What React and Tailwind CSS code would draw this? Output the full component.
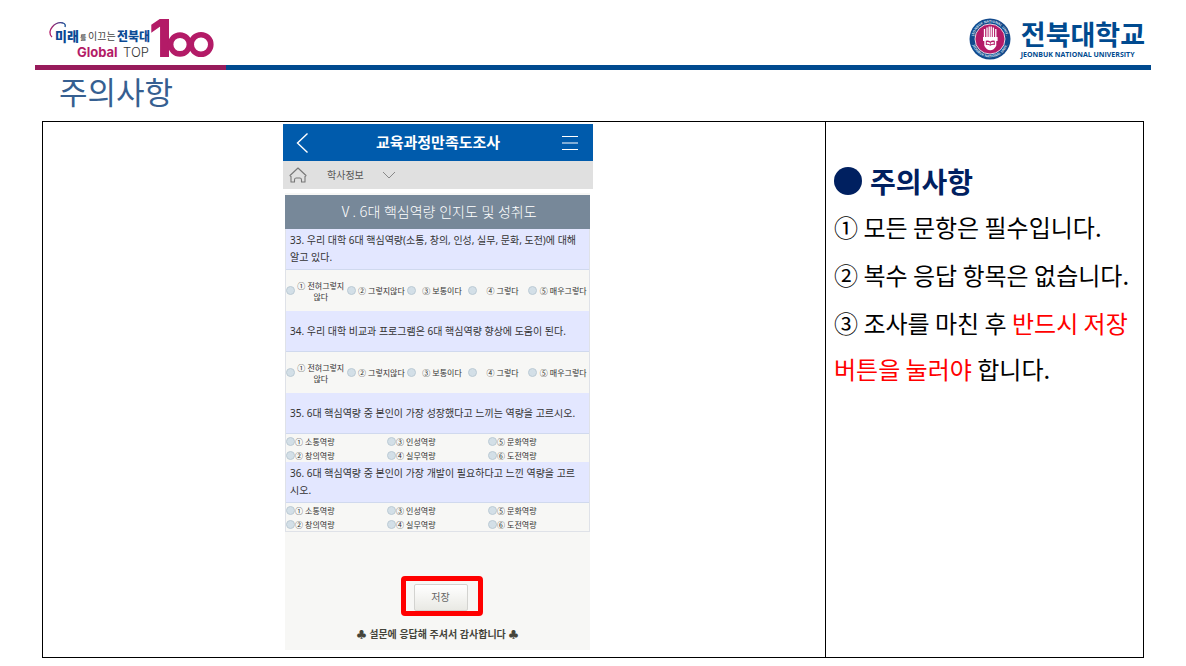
import React from 'react';

const AGREE_OPTIONS = ['① 전혀그렇지않다', '② 그렇지않다', '③ 보통이다', '④ 그렇다', '⑤ 매우그렇다'];

const COMPETENCIES = ['① 소통역량', '② 창의역량', '③ 인성역량', '④ 실무역량', '⑤ 문화역량', '⑥ 도전역량'];

const QUESTIONS = [
  {
    id: 'q33',
    text: '33. 우리 대학 6대 핵심역량(소통, 창의, 인성, 실무, 문화, 도전)에 대해 알고 있다.',
    type: 'scale',
  },
  { id: 'q34', text: '34. 우리 대학 비교과 프로그램은 6대 핵심역량 향상에 도움이 된다.', type: 'scale' },
  { id: 'q35', text: '35. 6대 핵심역량 중 본인이 가장 성장했다고 느끼는 역량을 고르시오.', type: 'pick' },
  { id: 'q36', text: '36. 6대 핵심역량 중 본인이 가장 개발이 필요하다고 느낀 역량을 고르시오.', type: 'pick' },
];

const CampaignLogo = () => (
  <svg width="170" height="48" viewBox="0 0 170 48" className="overflow-visible font-['Noto_Sans_CJK_KR',sans-serif]" role="img" aria-label="미래를 이끄는 전북대 Global TOP 100">
    <defs>
      <linearGradient id="swoosh" x1="0" y1="0" x2="1" y2="0">
        <stop offset="0" stopColor="#b5206b" />
        <stop offset="1" stopColor="#0b4a94" />
      </linearGradient>
    </defs>
    <path d="M5 22 C-1 16 8 6 16 8 Q19 9 18 12" fill="none" stroke="url(#swoosh)" strokeWidth="1.3" />
    <text x="8" y="26" fontSize="13" fontWeight="900" fill="#0b4a94">미래</text>
    <text x="33" y="25" fontSize="7" fill="#333">를</text>
    <text x="41" y="25" fontSize="10" fill="#444">이끄는</text>
    <text x="70" y="26" fontSize="12" fontWeight="900" fill="#0b4a94">전북대</text>
    <text x="30" y="42" fontSize="13" fontWeight="700" fill="#b31b67" className="font-[Inter,sans-serif]">Global</text>
    <text x="76" y="42" fontSize="13" fontWeight="300" fill="#333" className="font-[Inter,sans-serif]">TOP</text>
    <text x="102" y="42" fontSize="52" fontWeight="800" fill="#b31b67" className="font-[Inter,sans-serif]">1</text>
    <g fill="none" stroke="#b31b67" strokeWidth="5.6">
      <circle cx="133" cy="29.500" r="9.400" />
      <circle cx="154" cy="29.500" r="9.800" />
    </g>
  </svg>
);

const Emblem = () => (
  <svg width="42" height="42" viewBox="0 0 42 42" aria-hidden="true">
    <defs>
      <path id="ringTop" d="M4.6 21 A16.4 16.4 0 0 1 37.4 21" />
      <path id="ringBottom" d="M2.6 21 A18.4 18.4 0 0 0 39.4 21" />
    </defs>
    <circle cx="21" cy="21" r="20.5" fill="#124a8c" />
    <circle cx="21" cy="21" r="15" fill="#b31b67" stroke="#fff" strokeWidth="0.8" />
    <g fill="#d7e2f0" fontSize="3.4" fontWeight="700" textAnchor="middle" className="font-['Open_Sans',sans-serif]">
      <text><textPath href="#ringTop" startOffset="50%">JEONBUK NATIONAL UNIV.</textPath></text>
      <text><textPath href="#ringBottom" startOffset="50%">JEONBUK NATIONAL UNIV.</textPath></text>
    </g>
    <path d="M15.5 11v8M18 9.5v9.5M20.2 8.5v10.5M22.2 8.5v10.5M24.4 9.5v9.5M26.8 11v8" stroke="#fff" strokeWidth="1.3" />
    <path d="M14 19h14.6v4h-1.3v4.700q-2.500 4.500-6 4.600q-3.500-.1-6-4.600v-4.700H14z" fill="#fff" />
    <path d="M16.800 22.800q2.500-.8 4.500.6q2-1.400 4.500-.6v4.200q-2.500-.6-4.500.8q-2-1.400-4.500-.8z" fill="#b31b67" />
    <path d="M17.800 24q2-.3 3.200.8v1.600q-1.400-.8-3.200-.6zM24.800 24q-2-.3-3.200.8v1.600q1.400-.8 3.200-.6z" fill="#fff" />
  </svg>
);

const Radio = ({ id, name }) => (
  <input
    type="radio"
    id={id}
    name={name}
    className="size-[9px] shrink-0 appearance-none rounded-full border border-[#bccbd5] bg-[#d3dfe7] checked:bg-[#005bac]"
  />
);

const ScaleOptions = ({ question }) => (
  <div className="grid min-h-[41px] grid-cols-5 items-center">
    {AGREE_OPTIONS.map((label, index) => (
      <div key={label} className="flex items-center">
        <Radio id={`${question.id}-${index}`} name={question.id} />
        <label htmlFor={`${question.id}-${index}`} className="flex-1 text-center text-[8px] leading-[11px]">
          {label}
        </label>
      </div>
    ))}
  </div>
);

const PickOptions = ({ question }) => (
  <div className="grid grid-flow-col grid-cols-3 grid-rows-2">
    {COMPETENCIES.map((label, index) => (
      <div key={label} className="flex h-[14px] items-center">
        <Radio id={`${question.id}-${index}`} name={question.id} />
        <label htmlFor={`${question.id}-${index}`} className="text-[8px] leading-[11px]">
          {label}
        </label>
      </div>
    ))}
  </div>
);

const SurveyPhone = () => (
  <section className="ml-2 w-[310px] font-['Noto_Sans','Noto_Sans_CJK_KR',sans-serif]">
    <header className="flex h-[37px] items-center justify-between bg-[#005bac] pr-3.5 pl-3 text-white">
      <button type="button" aria-label="뒤로">
        <svg width="16" height="22" viewBox="0 0 16 22" fill="none" stroke="currentColor" strokeWidth="1.4">
          <path d="M12.500 1.500 2.500 11l10 9.500" />
        </svg>
      </button>
      <h2 className="pl-1 text-[15px] font-bold">교육과정만족도조사</h2>
      <button type="button" aria-label="메뉴">
        <svg width="18" height="16" viewBox="0 0 18 16" stroke="currentColor" strokeWidth="1.2">
          <path d="M1 1.500h16M1 8h16M1 14.500h16" />
        </svg>
      </button>
    </header>
    <nav className="flex h-7 items-center bg-[#e0e0e0] pl-1.5 text-[#555]">
      <a href="#home" aria-label="홈">
        <svg width="18" height="18" viewBox="0 0 18 18" fill="none" stroke="#777" strokeWidth="1.1">
          <path d="M1 9.500 9 2l8 7.500-1 1V16h-3.500v-2q0-2-1.500-2h-4q-1.500 0-1.500 2v2H2v-5.500z" strokeLinejoin="round" />
        </svg>
      </a>
      <a href="#academic" className="ml-5 text-[10px]">학사정보</a>
      <svg width="14" height="8" viewBox="0 0 14 8" fill="none" stroke="#888" className="ml-4.5" aria-hidden="true">
        <path d="M1 1l6 6 6-6" />
      </svg>
    </nav>
    <form className="mr-[3px] ml-0.5 mt-1 bg-[#f7f7f5] pt-0.5 text-[#333]">
      <h3 className="flex h-[34px] items-center justify-center bg-[#778899] text-sm font-light text-white">
        Ⅴ. 6대 핵심역량 인지도 및 성취도
      </h3>
      <div className="border-x border-b border-[#dfe2e8]">
        {QUESTIONS.map((question) => (
          <div key={question.id} role="radiogroup" aria-labelledby={question.id}>
            <div className="flex min-h-[41px] items-center border-b border-[#d0d9ee] bg-[#e3e7ff] pr-2 pl-1">
              <p id={question.id} className="text-[10px] leading-[17px]">{question.text}</p>
            </div>
            {question.type === 'scale' ? <ScaleOptions question={question} /> : <PickOptions question={question} />}
          </div>
        ))}
      </div>
      <div className="mt-11 flex justify-center pl-2">
        <div className="rounded-sm border-[5px] border-[#ff0000] pt-[3px] pr-2.5 pl-2">
          <button
            type="button"
            className="block h-[27px] w-[54px] rounded-xs border border-[#d3d3d0] bg-linear-to-b from-white to-[#e9e9e4] text-[10px] text-[#666]"
          >
            저장
          </button>
        </div>
      </div>
      <p className="pt-2.5 pb-2 text-center text-[10px] leading-4 font-bold text-[#44443a]">
        ♣ 설문에 응답해 주셔서 감사합니다 ♣
      </p>
    </form>
  </section>
);

const Notice = () => (
  <aside className="w-[318px] shrink-0 border-l border-black pt-9 pl-2 text-2xl leading-[46px] font-['Noto_Sans_CJK_KR',sans-serif]">
    <h2 className="flex items-center gap-2 text-[28px] font-bold text-[#002060]">
      <span className="size-7 rounded-full bg-[#002060]" />
      주의사항
    </h2>
    <p>① 모든 문항은 필수입니다.</p>
    <p className="mt-0.5">② 복수 응답 항목은 없습니다.</p>
    <p className="mt-0.5">
      ③ 조사를 마친 후 <span className="text-[#ff0000]">반드시 저장 버튼을 눌러야</span> 합니다.
    </p>
  </aside>
);

export default function App() {
  return (
    <div className="bg-white px-[35px] pb-2 text-black font-['Noto_Sans_CJK_KR',sans-serif]">
      <header className="flex h-[65px] items-center justify-between pt-3 pr-1.5 pl-3">
        <CampaignLogo />
        <div className="flex items-center gap-2.5 text-[#004a8f]">
          <Emblem />
          <div>
            <p className="text-[27px] leading-8 font-bold">전북대학교</p>
            <p className="text-[7px] leading-[10px] font-bold font-['Open_Sans',sans-serif]">JEONBUK NATIONAL UNIVERSITY</p>
          </div>
        </div>
      </header>
      <div className="flex h-[5px] bg-[#004a8f]">
        <div className="w-[191px] bg-[#971b5b]" />
      </div>
      <h1 className="pl-6 text-[31px] leading-[41px] font-normal text-[#365f91]">주의사항</h1>
      <main className="mx-[7px] mt-2.5 flex border border-black">
        <div className="flex flex-1 justify-center pt-0.5 pb-[7px]">
          <SurveyPhone />
        </div>
        <Notice />
      </main>
    </div>
  );
}
